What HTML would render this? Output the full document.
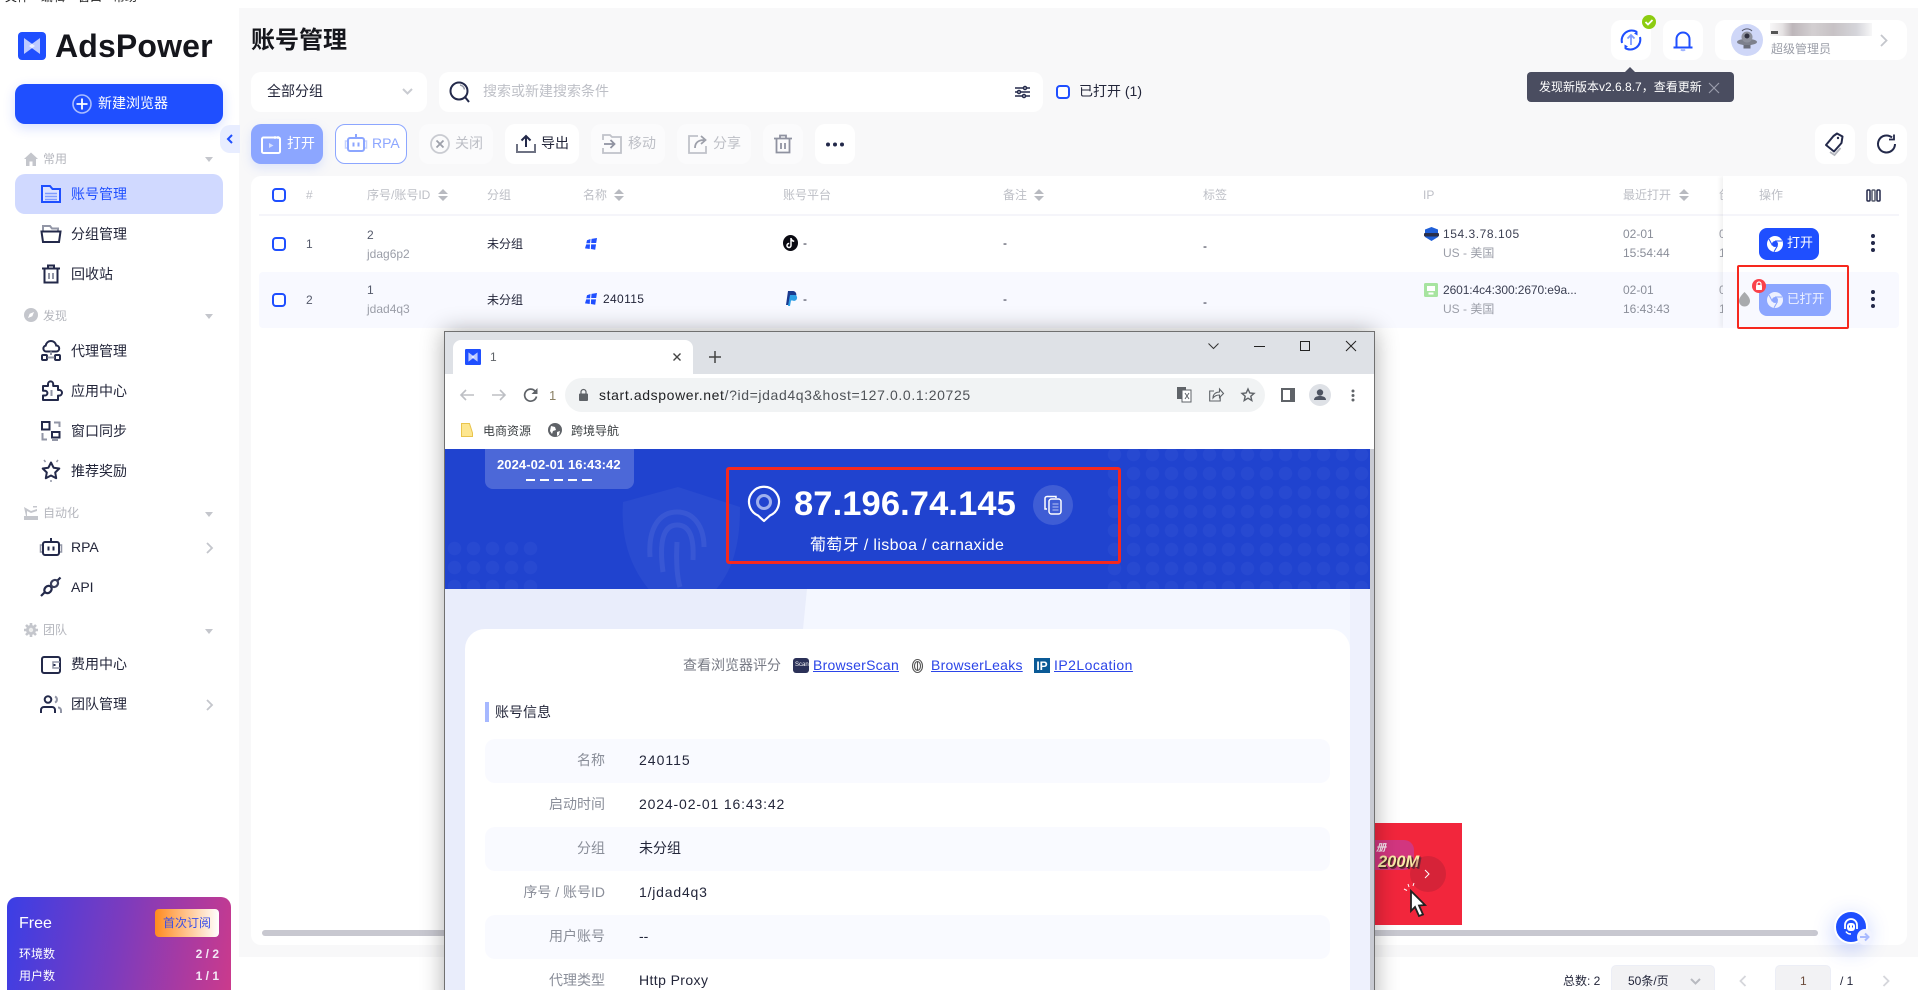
<!DOCTYPE html>
<html lang="zh"><head><meta charset="utf-8"><title>AdsPower</title>
<style>
*{box-sizing:border-box}
html,body{margin:0;padding:0;width:1918px;height:990px;overflow:hidden;background:#fff}
body{position:relative;font:12px "Liberation Sans","Noto Sans CJK SC",sans-serif;color:#23263a}
.a{position:absolute}
.t{position:absolute;white-space:nowrap;line-height:20px;margin-top:-10px;height:20px}
.m{font-size:14px}
.g{color:#9b9ea8}
.h{color:#bdbfc6}
.sec{color:#b4b6bd;font-size:12px}
svg{position:absolute;overflow:visible}
.btn{position:absolute;top:124px;height:40px;background:#fff;border-radius:10px}
.dis{background:#fbfbfc}
.cb{position:absolute;width:14px;height:14px;border:2px solid #1f4fff;border-radius:4px;background:#fff}
.row{position:absolute;left:485px;width:845px;height:44px;background:#f9faff;border-radius:10px}
.lb{position:absolute;right:1313px;white-space:nowrap;font-size:14px;color:#8a8e99;line-height:20px;margin-top:-10px}
.vl{position:absolute;left:639px;white-space:nowrap;font-size:14px;color:#23263a;line-height:20px;margin-top:-10px}
.lnk{color:#2b45e8;text-decoration:underline;font-size:14px;letter-spacing:.25px}
</style></head><body>

<!-- OS menu clipped -->
<div class="t" style="left:5px;top:-3px;color:#222">文件</div>
<div class="t" style="left:41px;top:-3px;color:#222">编辑</div>
<div class="t" style="left:78px;top:-3px;color:#222">窗口</div>
<div class="t" style="left:113px;top:-3px;color:#222">帮助</div>

<!-- main background -->
<div class="a" style="left:239px;top:8px;width:1679px;height:949px;background:#f8f8f9"></div>

<!-- SIDEBAR -->
<svg style="left:18px;top:32px" width="28" height="28" viewBox="0 0 28 28"><rect width="28" height="28" rx="4" fill="#1f4fff"/><path d="M6 6l11 8-11 8z" fill="#fff" opacity=".7"/><path d="M22 6l-11 8 11 8z" fill="#fff" opacity=".7"/></svg>
<div class="t" style="left:55px;top:46px;font-size:32px;font-weight:700;color:#15161c;letter-spacing:.15px">AdsPower</div>

<div class="a" style="left:15px;top:84px;width:208px;height:40px;background:#1f4fff;border-radius:10px;box-shadow:0 4px 12px rgba(31,79,255,.18)"></div>
<svg style="left:72px;top:94px" width="20" height="20" viewBox="0 0 20 20" fill="none"><circle cx="10" cy="10" r="9" stroke="#a9bcff" stroke-width="1.6"/><path d="M10 4.500v11M4.500 10h11" stroke="#fff" stroke-width="1.8"/></svg>
<div class="t m" style="left:98px;top:103px;color:#fff">新建浏览器</div>

<div class="a" style="left:220px;top:125px;width:20px;height:28px;background:#e8edff;border-radius:10px 0 0 10px"></div>
<svg style="left:226px;top:134px" width="8" height="10" viewBox="0 0 8 10" fill="none"><path d="M6 1L2 5l4 4" stroke="#1f4fff" stroke-width="2"/></svg>

<!-- sec: 常用 -->
<svg style="left:24px;top:152px" width="14" height="14" viewBox="0 0 14 14"><path d="M7 .5L14 7h-2v7H8.500V9.500h-3V14H2V7H0z" fill="#c4c6cc"/></svg>
<div class="t sec" style="left:43px;top:159px">常用</div>
<svg style="left:205px;top:157px" width="8" height="5"><path d="M0 0h8L4 5z" fill="#c4c6cc"/></svg>

<div class="a" style="left:15px;top:174px;width:208px;height:40px;background:#d0d9ff;border-radius:10px"></div>
<svg style="left:41px;top:185px" width="20" height="18" viewBox="0 0 20 18" fill="none"><path d="M1 1h8l2.500 3H19v13H1z" stroke="#1f4fff" stroke-width="2" fill="#dde3ff"/><path d="M4 8.500h12M4 11.500h12M4 14.500h12" stroke="#7f9cff" stroke-width="1.400"/></svg>
<div class="t m" style="left:71px;top:194px;color:#1f4fff">账号管理</div>

<svg style="left:40px;top:224px" width="22" height="19" viewBox="0 0 22 19" fill="none" stroke="#23294a" stroke-width="2"><path d="M3 7V2h7l2 2.500h6V7" stroke="#9296a6"/><path d="M1.500 7.500h19L19 18H3z"/></svg>
<div class="t m" style="left:71px;top:234px">分组管理</div>

<svg style="left:41px;top:264px" width="20" height="20" viewBox="0 0 20 20" fill="none" stroke="#23294a" stroke-width="2"><path d="M1 4.500h18M7 4V1.500h6V4M3.500 5v13.500h13V5"/><path d="M8 9v6M12 9v6" stroke="#9296a6"/></svg>
<div class="t m" style="left:71px;top:274px">回收站</div>

<!-- sec: 发现 -->
<svg style="left:24px;top:308px" width="14" height="14" viewBox="0 0 14 14"><circle cx="7" cy="7" r="7" fill="#c4c6cc"/><path d="M10 4L8.300 8.300 4 10l1.700-4.300z" fill="#fff"/></svg>
<div class="t sec" style="left:43px;top:316px">发现</div>
<svg style="left:205px;top:314px" width="8" height="5"><path d="M0 0h8L4 5z" fill="#c4c6cc"/></svg>

<svg style="left:41px;top:341px" width="20" height="20" viewBox="0 0 20 20" fill="none" stroke="#23294a" stroke-width="2"><path d="M5 10.500a3 3 0 0 1-.3-5.900A5.300 5.300 0 0 1 15.200 4.500a3 3 0 0 1 0 6z"/><path d="M10 10.500v3.500" stroke="#9296a6"/><rect x="1" y="14" width="5" height="5" rx="1"/><rect x="14" y="14" width="5" height="5" rx="1"/><path d="M6.500 16.500h7" stroke="#9296a6"/></svg>
<div class="t m" style="left:71px;top:351px">代理管理</div>

<svg style="left:41px;top:381px" width="21" height="20" viewBox="0 0 21 20" fill="none" stroke="#23294a" stroke-width="2" stroke-linejoin="round"><path d="M2 5h5V3a2.600 2.600 0 0 1 5.200 0v2h4.800v4h1.200a2.800 2.800 0 0 1 0 5.600H17V19H2v-4.500h2a2.400 2.400 0 0 0 0-4.800H2z"/><path d="M10.500 9v6" stroke="#9296a6"/></svg>
<div class="t m" style="left:71px;top:391px">应用中心</div>

<svg style="left:41px;top:421px" width="20" height="20" viewBox="0 0 20 20" fill="none" stroke="#23294a" stroke-width="2"><rect x="1" y="1" width="7.500" height="7.500"/><rect x="11" y="11" width="7.500" height="5.500"/><path d="M13 1.500h5.500V6M1.500 12v6.500H6M11 19h6" stroke="#9296a6"/></svg>
<div class="t m" style="left:71px;top:431px">窗口同步</div>

<svg style="left:41px;top:459px" width="20" height="24" viewBox="0 0 20 24" fill="none"><path d="M10 3.500l2.600 5.200 5.700.8-4.100 4 1 5.700-5.200-2.700-5.200 2.700 1-5.700-4.100-4 5.700-.8z" stroke="#23294a" stroke-width="2" stroke-linejoin="round"/><path d="M3 1l1.500 2M17 1l-1.500 2M10 21v2" stroke="#9296a6" stroke-width="1.500"/></svg>
<div class="t m" style="left:71px;top:471px">推荐奖励</div>

<!-- sec: 自动化 -->
<svg style="left:24px;top:506px" width="14" height="14" viewBox="0 0 14 14" fill="#c4c6cc"><path d="M0 1l7 4 6-2v2L7 7 3 5v5h-1zM0 10h14v4H0zM9 0h4v1.500H9z"/></svg>
<div class="t sec" style="left:43px;top:513px">自动化</div>
<svg style="left:205px;top:512px" width="8" height="5"><path d="M0 0h8L4 5z" fill="#c4c6cc"/></svg>

<svg style="left:39px;top:538px" width="24" height="18" viewBox="0 0 24 18" fill="none"><path d="M12 0v4" stroke="#23294a" stroke-width="2"/><rect x="4" y="4" width="16" height="13" rx="2" stroke="#23294a" stroke-width="2"/><path d="M9.500 8.500v4M14.500 8.500v4" stroke="#23294a" stroke-width="2"/><path d="M3 7H1.500v7H3M21 7h1.500v7H21" stroke="#9296a6" stroke-width="1.500"/></svg>
<div class="t m" style="left:71px;top:547px">RPA</div>
<svg style="left:206px;top:542px" width="7" height="12" fill="none"><path d="M1 1l5 5-5 5" stroke="#c4c6cc" stroke-width="1.800"/></svg>

<svg style="left:41px;top:577px" width="20" height="20" viewBox="0 0 20 20" fill="none" stroke="#23294a" stroke-width="2.200"><path d="M0 19l4-4M16 4l3.500-3.500"/><ellipse cx="7" cy="12.500" rx="3.300" ry="4" transform="rotate(45 7 12.500)"/><ellipse cx="13.500" cy="6.500" rx="3.300" ry="3.800" transform="rotate(45 13.500 6.500)" stroke="#3a3f5c"/></svg>
<div class="t m" style="left:71px;top:587px">API</div>

<!-- sec: 团队 -->
<svg style="left:24px;top:623px" width="14" height="14" viewBox="0 0 14 14"><path d="M7 0v14M0 7h14M2 2l10 10M12 2L2 12" stroke="#c4c6cc" stroke-width="2.600"/><circle cx="7" cy="7" r="5" fill="#c4c6cc"/><circle cx="7" cy="7" r="2.200" fill="#eceded"/></svg>
<div class="t sec" style="left:43px;top:630px">团队</div>
<svg style="left:205px;top:629px" width="8" height="5"><path d="M0 0h8L4 5z" fill="#c4c6cc"/></svg>

<svg style="left:41px;top:656px" width="20" height="18" viewBox="0 0 20 18" fill="none"><rect x="1" y="1" width="18" height="16" rx="2" stroke="#23294a" stroke-width="2"/><path d="M19 6h-7v6h7" stroke="#9296a6" stroke-width="1.500"/><rect x="12.500" y="8" width="2" height="2" fill="#23294a"/></svg>
<div class="t m" style="left:71px;top:664px">费用中心</div>

<svg style="left:40px;top:695px" width="22" height="18" viewBox="0 0 22 18" fill="none" stroke="#23294a" stroke-width="2"><circle cx="8" cy="4.500" r="3.300"/><path d="M1 18v-3a3 3 0 0 1 3-3h8a3 3 0 0 1 3 3v3"/><path d="M15 1.500a3.300 3.300 0 0 1 0 6M18 12.500a3 3 0 0 1 3 3V18" stroke="#9296a6"/></svg>
<div class="t m" style="left:71px;top:704px">团队管理</div>
<svg style="left:206px;top:699px" width="7" height="12" fill="none"><path d="M1 1l5 5-5 5" stroke="#c4c6cc" stroke-width="1.800"/></svg>

<!-- Free card -->
<div class="a" style="left:7px;top:897px;width:224px;height:93px;border-radius:10px 10px 0 0;background:linear-gradient(100deg,#3a3ee6 0%,#7d3bbd 50%,#cb3a8c 100%)"></div>
<div class="t" style="left:19px;top:924px;color:#fff;font-size:16px">Free</div>
<div class="a" style="left:155px;top:909px;width:64px;height:28px;border-radius:4px;background:linear-gradient(90deg,#ff8a1f,#fff);color:#3a4fe8;text-align:center;line-height:28px;font-size:12px">首次订阅</div>
<div class="t" style="left:19px;top:954px;color:#fff">环境数</div>
<div class="t" style="right:1699px;top:954px;color:#f3e8f6;font-weight:700">2 / 2</div>
<div class="t" style="left:19px;top:976px;color:#fff">用户数</div>
<div class="t" style="right:1699px;top:976px;color:#f3e8f6;font-weight:700">1 / 1</div>

<!-- HEADER -->
<div class="t" style="left:251px;top:41px;font-size:24px;font-weight:700;color:#15161c;line-height:30px;height:30px;margin-top:-15px">账号管理</div>

<div class="a" style="left:251px;top:72px;width:176px;height:40px;background:#fff;border-radius:10px"></div>
<div class="t m" style="left:267px;top:91px">全部分组</div>
<svg style="left:402px;top:88px" width="11" height="7" fill="none"><path d="M1 1l4.500 4.500L10 1" stroke="#c9cbd1" stroke-width="2"/></svg>

<div class="a" style="left:439px;top:72px;width:604px;height:40px;background:#fff;border-radius:10px"></div>
<svg style="left:449px;top:81px" width="21" height="22" viewBox="0 0 21 22" fill="none"><circle cx="10" cy="10" r="8.500" stroke="#23294a" stroke-width="2"/><path d="M16 16l4 5" stroke="#23294a" stroke-width="2"/><path d="M11 4a5.500 5.500 0 0 1 4.500 4.500" stroke="#9296a6" stroke-width="1.500"/></svg>
<div class="t m" style="left:483px;top:91px;color:#bdbfc6">搜索或新建搜索条件</div>
<svg style="left:1015px;top:85px" width="15" height="14" viewBox="0 0 15 14" fill="none" stroke="#23294a" stroke-width="1.500"><path d="M0 3h15M0 7h15M0 11h15"/><circle cx="10" cy="3" r="1.500" fill="#fff"/><circle cx="4" cy="7" r="1.500" fill="#fff"/><circle cx="9" cy="11" r="1.500" fill="#fff"/></svg>
<div class="cb" style="left:1056px;top:85px"></div>
<div class="t" style="left:1079px;top:91px;font-size:14px">已打开 (1)</div>

<!-- Toolbar -->
<div class="a" style="left:251px;top:124px;width:72px;height:40px;background:#8ca6ff;border-radius:10px;box-shadow:0 4px 10px rgba(140,166,255,.25)"></div>
<svg style="left:261px;top:135px" width="20" height="19" viewBox="0 0 20 19" fill="none"><rect x="1" y="2.500" width="18" height="15.500" rx="1.500" stroke="#fff" stroke-width="2"/><path d="M14 1v3M17 1v3" stroke="#fff"/><path d="M8 8l4.500 2.500L8 13z" fill="#d5deff"/></svg>
<div class="t m" style="left:287px;top:143px;color:#fff">打开</div>

<div class="a" style="left:335px;top:124px;width:72px;height:40px;background:#fff;border:1px solid #8ca6ff;border-radius:10px"></div>
<svg style="left:344px;top:134px" width="24" height="18" viewBox="0 0 24 18" fill="none"><path d="M12 0v4" stroke="#8ca6ff" stroke-width="2"/><rect x="4" y="4" width="16" height="13" rx="2" stroke="#8ca6ff" stroke-width="2"/><path d="M9.500 8.500v4M14.500 8.500v4" stroke="#8ca6ff" stroke-width="2"/><path d="M3 7H1.500v7H3M21 7h1.500v7H21" stroke="#c5d2ff" stroke-width="1.500"/></svg>
<div class="t m" style="left:372px;top:143px;color:#8ca6ff">RPA</div>

<div class="btn dis" style="left:419px;width:74px"></div>
<svg style="left:430px;top:134px" width="20" height="20" viewBox="0 0 20 20" fill="none"><circle cx="10" cy="10" r="9" stroke="#c9cbd1" stroke-width="1.800"/><path d="M6.500 6.500l7 7M13.500 6.500l-7 7" stroke="#9da0aa" stroke-width="1.800"/></svg>
<div class="t m" style="left:455px;top:143px;color:#bdbfc6">关闭</div>

<div class="btn" style="left:505px;width:74px"></div>
<svg style="left:516px;top:134px" width="20" height="19" viewBox="0 0 20 19" fill="none"><path d="M1 10v8h18v-8" stroke="#6e7283" stroke-width="2"/><path d="M10 13V2M5.500 6.500L10 2l4.500 4.500" stroke="#23294a" stroke-width="2"/></svg>
<div class="t m" style="left:541px;top:143px;color:#23263a">导出</div>

<div class="btn dis" style="left:591px;width:74px"></div>
<svg style="left:602px;top:134px" width="20" height="20" viewBox="0 0 20 20" fill="none" stroke="#c0c2c9" stroke-width="1.800"><path d="M1 6V1h7l2 2h9v16H1v-5"/><path d="M2 10h10M8.500 6l4 4-4 4" stroke="#8f92a0"/></svg>
<div class="t m" style="left:628px;top:143px;color:#bdbfc6">移动</div>

<div class="btn dis" style="left:677px;width:74px"></div>
<svg style="left:688px;top:134px" width="20" height="20" viewBox="0 0 20 20" fill="none"><path d="M10 2H1v17h17v-7" stroke="#c0c2c9" stroke-width="1.800"/><path d="M7 14c0-5 3-8 9-8M13 2l4.500 4L13 10" stroke="#9da0aa" stroke-width="1.800"/></svg>
<div class="t m" style="left:713px;top:143px;color:#bdbfc6">分享</div>

<div class="btn dis" style="left:763px;width:40px"></div>
<svg style="left:773px;top:134px" width="20" height="20" viewBox="0 0 20 20" fill="none" stroke="#8f92a0" stroke-width="1.800"><path d="M1 4.500h18M7 4V1.500h6V4M3.500 5v13.500h13V5M8 9v6M12 9v6"/></svg>

<div class="btn" style="left:815px;width:40px"></div>
<svg style="left:826px;top:142px" width="18" height="5"><circle cx="2" cy="2.500" r="2" fill="#23294a"/><circle cx="9" cy="2.500" r="2" fill="#23294a"/><circle cx="16" cy="2.500" r="2" fill="#23294a"/></svg>

<div class="btn" style="left:1815px;width:40px"></div>
<svg style="left:1824px;top:132px" width="22" height="24" viewBox="0 0 22 24" fill="none"><path d="M13 1.500l5.500 3-1 6.500-7.500 8.500-8-6.500 7.500-9z" stroke="#23294a" stroke-width="2" stroke-linejoin="round"/><circle cx="14" cy="6" r="1.200" fill="#23294a"/><path d="M6 20l4.500 3 6-7" stroke="#b4b6bd" stroke-width="1.800"/></svg>

<div class="btn" style="left:1867px;width:40px"></div>
<svg style="left:1877px;top:134px" width="20" height="20" viewBox="0 0 20 20" fill="none"><path d="M18 10a8.500 8.500 0 1 1-3-6.500" stroke="#23294a" stroke-width="2"/><path d="M17 .5v5h-5" stroke="#23294a" stroke-width="1.800"/></svg>

<!-- top right -->
<div class="a" style="left:1611px;top:20px;width:40px;height:40px;background:#fff;border-radius:10px"></div>
<svg style="left:1620px;top:29px" width="22" height="22" viewBox="0 0 22 22" fill="none"><path d="M2 14A10 10 0 0 1 17 3M20 8a10 10 0 0 1-15 11" stroke="#1f4fff" stroke-width="2"/><path d="M14 4.500l3.500-2v4zM8 17.500l-3.500 2v-4z" fill="#1f4fff"/><path d="M11 16V6M7.500 9.500L11 6l3.500 3.500" stroke="#7f9cff" stroke-width="1.800"/></svg>
<svg style="left:1642px;top:15px" width="14" height="14" viewBox="0 0 14 14"><circle cx="7" cy="7" r="7" fill="#8ccc10"/><path d="M3.500 7l2.500 2.500 4.500-4.500" fill="none" stroke="#fff" stroke-width="1.800"/></svg>

<div class="a" style="left:1663px;top:20px;width:40px;height:40px;background:#fff;border-radius:10px"></div>
<svg style="left:1673px;top:30px" width="20" height="21" viewBox="0 0 20 21" fill="none"><path d="M3.500 17V9a6.500 6.500 0 0 1 13 0v8M.5 17.500h19" stroke="#1f4fff" stroke-width="2"/><path d="M8 19.500a2.500 2 0 0 0 4 0" stroke="#9db2ff" stroke-width="2"/></svg>

<div class="a" style="left:1715px;top:20px;width:192px;height:40px;background:#fff;border-radius:10px"></div>
<svg style="left:1731px;top:24px" width="32" height="32" viewBox="0 0 32 32"><circle cx="16" cy="16" r="16" fill="#cfd7f8"/><ellipse cx="16" cy="18" rx="10" ry="3.200" fill="#7d808c"/><circle cx="16" cy="13" r="5.500" fill="#8e919d"/><circle cx="16" cy="12" r="2.500" fill="#2f3140"/><rect x="12.500" y="21" width="7" height="3.500" fill="#6b6e7a"/><path d="M11 7a7 7 0 0 1 10 0" stroke="#55586a" stroke-width="1" fill="none"/></svg>
<div class="a" style="left:1770px;top:23px;width:102px;height:13px;background:linear-gradient(90deg,#f8f7f8 0%,#e6e3e4 12%,#bdb6ba 22%,#d3cfd1 42%,#c7c2c5 62%,#d5d5da 85%,#f7f7f8 100%)"></div>
<div class="a" style="left:1771px;top:31px;width:7px;height:3px;background:#555"></div>
<div class="t" style="left:1771px;top:49px;color:#9b9ea8">超级管理员</div>
<svg style="left:1880px;top:34px" width="8" height="13" fill="none"><path d="M1 1l5.500 5.500L1 12" stroke="#c4c6cc" stroke-width="1.800"/></svg>

<!-- tooltip -->
<div class="a" style="left:1527px;top:72px;width:207px;height:30px;background:#4a4d60;border-radius:4px"></div>
<svg style="left:1625px;top:67px" width="10" height="5"><path d="M0 5L5 0l5 5z" fill="#4a4d60"/></svg>
<div class="t" style="left:1539px;top:87px;color:#fff">发现新版本v2.6.8.7，查看更新</div>
<svg style="left:1708px;top:82px" width="12" height="12" fill="none"><path d="M1 1l10 10M11 1L1 11" stroke="#9a9cab" stroke-width="1.200"/></svg>

<!-- TABLE -->
<div class="a" style="left:251px;top:176px;width:1656px;height:769px;background:#fff;border-radius:10px"></div>
<div class="a" style="left:259px;top:214px;width:1640px;height:2px;background:#f5f5fa"></div>
<div class="a" style="left:259px;top:272px;width:1640px;height:56px;background:#f8f9ff;border-radius:4px"></div>

<div class="cb" style="left:272px;top:188px"></div>
<div class="t h" style="left:306px;top:195px">#</div>
<div class="t h" style="left:367px;top:195px">序号/账号ID</div>
<svg style="left:438px;top:189px" width="10" height="12"><path d="M0 5l5-5 5 5zM0 7l5 5 5-5z" fill="#b8bac0"/></svg>
<div class="t h" style="left:487px;top:195px">分组</div>
<div class="t h" style="left:583px;top:195px">名称</div>
<svg style="left:614px;top:189px" width="10" height="12"><path d="M0 5l5-5 5 5zM0 7l5 5 5-5z" fill="#b8bac0"/></svg>
<div class="t h" style="left:783px;top:195px">账号平台</div>
<div class="t h" style="left:1003px;top:195px">备注</div>
<svg style="left:1034px;top:189px" width="10" height="12"><path d="M0 5l5-5 5 5zM0 7l5 5 5-5z" fill="#b8bac0"/></svg>
<div class="t h" style="left:1203px;top:195px">标签</div>
<div class="t h" style="left:1423px;top:195px">IP</div>
<div class="t h" style="left:1623px;top:195px">最近打开</div>
<svg style="left:1679px;top:189px" width="10" height="12"><path d="M0 5l5-5 5 5zM0 7l5 5 5-5z" fill="#b8bac0"/></svg>
<div class="t h" style="left:1719px;top:195px">创</div>

<!-- row 1 -->
<div class="cb" style="left:272px;top:237px"></div>
<div class="t g" style="left:306px;top:244px;color:#555a6b">1</div>
<div class="t" style="left:367px;top:235px;color:#555a6b">2</div>
<div class="t g" style="left:367px;top:254px">jdag6p2</div>
<div class="t" style="left:487px;top:244px">未分组</div>
<svg style="left:585px;top:238px" width="12" height="12" viewBox="0 0 12 12" fill="#1f4fff"><path d="M2 2.200L5.500 1l-.4 4.300H1.300zM6.500.9L12 0l-.8 5H6.200zM1.200 6.400H5L4.700 11 0 10.400zM6.100 6.400H11l-.8 5.300-4.300-.7z"/></svg>
<svg style="left:783px;top:235px" width="15" height="16" viewBox="0 0 15 16"><ellipse cx="7.500" cy="8" rx="7.500" ry="8" fill="#0a0a12"/><path d="M8 3v7.500a2 2 0 1 1-1.800-2M8 3.500c.5 1.800 1.800 2.600 3.200 2.700" fill="none" stroke="#fff" stroke-width="1.500"/></svg>
<div class="t" style="left:803px;top:243px">-</div>
<div class="t" style="left:1003px;top:243px">-</div>
<div class="t" style="left:1203px;top:246px">-</div>
<svg style="left:1424px;top:227px" width="15" height="14" viewBox="0 0 15 14"><path d="M7.500 0L14 2.500V10l-6.500 4L1 10V2.500z" fill="#1f5fd8"/><rect x="0" y="6" width="15" height="3.500" rx="1" fill="#2a2f4a"/></svg>
<div class="t" style="left:1443px;top:234px;color:#3b3f52;letter-spacing:.55px">154.3.78.105</div>
<div class="t g" style="left:1443px;top:253px">US - 美国</div>
<div class="t g" style="left:1623px;top:234px;color:#8a8e99">02-01</div>
<div class="t g" style="left:1623px;top:253px;color:#8a8e99">15:54:44</div>
<div class="t g" style="left:1719px;top:234px">0</div>
<div class="t g" style="left:1719px;top:253px">1</div>

<!-- row 2 -->
<div class="cb" style="left:272px;top:293px"></div>
<div class="t g" style="left:306px;top:300px;color:#555a6b">2</div>
<div class="t" style="left:367px;top:290px;color:#555a6b">1</div>
<div class="t g" style="left:367px;top:309px">jdad4q3</div>
<div class="t" style="left:487px;top:300px">未分组</div>
<svg style="left:585px;top:293px" width="12" height="12" viewBox="0 0 12 12" fill="#1f4fff"><path d="M2 2.200L5.500 1l-.4 4.300H1.300zM6.500.9L12 0l-.8 5H6.200zM1.200 6.400H5L4.700 11 0 10.400zM6.100 6.400H11l-.8 5.300-4.300-.7z"/></svg>
<div class="t" style="left:603px;top:299px;letter-spacing:.35px">240115</div>
<svg style="left:786px;top:291px" width="11" height="16" viewBox="0 0 11 16"><path d="M2 0h5a3.500 3.500 0 0 1 3 5 4 4 0 0 1-4 4H4l-1 5H0z" fill="#1a3a8f"/><path d="M4 4h5.500a3 3 0 0 1-3 5.500H5L4 15H2z" fill="#2ea0e6"/></svg>
<div class="t" style="left:803px;top:299px">-</div>
<div class="t" style="left:1003px;top:299px">-</div>
<div class="t" style="left:1203px;top:302px">-</div>
<svg style="left:1424px;top:283px" width="14" height="14" viewBox="0 0 14 14"><rect width="14" height="14" rx="1.500" fill="#a7e4a0"/><rect x="3" y="3" width="8" height="5" fill="#fff"/><rect x="4.500" y="9.500" width="5" height="2" fill="#fff"/></svg>
<div class="t" style="left:1443px;top:290px;color:#3b3f52;letter-spacing:-.1px">2601:4c4:300:2670:e9a...</div>
<div class="t g" style="left:1443px;top:309px">US - 美国</div>
<div class="t g" style="left:1623px;top:290px;color:#8a8e99">02-01</div>
<div class="t g" style="left:1623px;top:309px;color:#8a8e99">16:43:43</div>
<div class="t g" style="left:1719px;top:290px">0</div>
<div class="t g" style="left:1719px;top:309px">1</div>

<!-- fixed column -->
<div class="a" style="left:1723px;top:176px;width:184px;height:152px;background:#fff;box-shadow:-3px 0 4px rgba(0,0,0,.05);border-radius:0 10px 0 0;clip-path:inset(0 0 0 -8px)"></div>
<div class="a" style="left:1723px;top:214px;width:176px;height:2px;background:#f5f5fa"></div>
<div class="a" style="left:1723px;top:272px;width:176px;height:56px;background:#f8f9ff;border-radius:0 4px 4px 0"></div>
<div class="t h" style="left:1759px;top:195px">操作</div>
<svg style="left:1866px;top:189px" width="15" height="13" fill="none" stroke="#23294a" stroke-width="1.500"><rect x="1" y="1" width="3" height="11" rx="1"/><rect x="6" y="1" width="3" height="11" rx="1" stroke="#555a6b"/><rect x="11" y="1" width="3" height="11" rx="1"/></svg>

<div class="a" style="left:1759px;top:228px;width:60px;height:32px;background:#1f4fff;border-radius:8px"></div>
<svg style="left:1767px;top:236px" width="16" height="16" viewBox="0 0 16 16"><circle cx="8" cy="8" r="8" fill="#fff"/><circle cx="8" cy="8" r="3" fill="#1f4fff"/><path d="M8 5h7M5.400 9.500L2 3M10.600 9.500L7 15.800" stroke="#1f4fff" stroke-width="1"/></svg>
<div class="t m" style="left:1787px;top:243px;font-size:13px;color:#fff">打开</div>
<svg style="left:1871px;top:233px" width="4" height="20"><circle cx="2" cy="3" r="2" fill="#23294a"/><circle cx="2" cy="10" r="2" fill="#23294a"/><circle cx="2" cy="17" r="2" fill="#23294a"/></svg>

<svg style="left:1739px;top:292px" width="11" height="15" viewBox="0 0 11 15"><path d="M5.500 0c3 3 5.500 6 5.500 9a5.500 5.500 0 0 1-11 0C0 6 2.500 3 5.500 0z" fill="#a8aaad"/></svg>
<div class="a" style="left:1759px;top:284px;width:72px;height:32px;background:#8ca6ff;border-radius:8px"></div>
<svg style="left:1767px;top:292px" width="16" height="16" viewBox="0 0 16 16"><circle cx="8" cy="8" r="8" fill="#eef1ff"/><circle cx="8" cy="8" r="3" fill="#8ca6ff"/><path d="M8 5h7M5.400 9.500L2 3M10.600 9.500L7 15.800" stroke="#8ca6ff" stroke-width="1"/></svg>
<div class="t" style="left:1787px;top:299px;font-size:12.500px;color:#eef1ff">已打开</div>
<svg style="left:1752px;top:279px" width="14" height="14" viewBox="0 0 14 14"><circle cx="7" cy="7" r="7" fill="#f9424b"/><rect x="4" y="6" width="6" height="5" rx=".8" fill="#fff"/><path d="M5 6V5a2 2 0 0 1 4 0v1" fill="none" stroke="#fff" stroke-width="1.200"/></svg>
<svg style="left:1871px;top:289px" width="4" height="20"><circle cx="2" cy="3" r="2" fill="#23294a"/><circle cx="2" cy="10" r="2" fill="#23294a"/><circle cx="2" cy="17" r="2" fill="#23294a"/></svg>
<div class="a" style="left:1737px;top:265px;width:112px;height:64px;border:2px solid #f6281e;border-radius:2px"></div>

<!-- h scrollbar -->
<div class="a" style="left:262px;top:930px;width:1556px;height:6px;background:#c8c8d0;border-radius:3px"></div>

<!-- ad -->
<div class="a" style="left:1374px;top:823px;width:88px;height:102px;background:#f2263c;overflow:hidden">
 <div class="a" style="left:0;top:17px;width:40px;height:30px;background:#d2367f;border-radius:0 10px 10px 0"></div>
 <div class="a" style="left:2px;top:20px;color:#f8e6f0;font-size:10px;font-weight:700;font-style:italic;line-height:12px">册</div>
 <div class="a" style="left:4px;top:29px;color:#f9eaa6;font-size:16.500px;font-weight:700;font-style:italic;line-height:20px;text-shadow:1px 1px 0 #4a1f28,2px 2px 0 #6e2a38">200M</div>
 <div class="a" style="left:36px;top:33px;width:36px;height:36px;border-radius:50%;background:rgba(150,30,50,.3)"></div>
 <svg style="left:50px;top:46px" width="7" height="10" fill="none"><path d="M1 1l4 4-4 4" stroke="#fff" stroke-width="1"/></svg>
 <svg style="left:28px;top:60px" width="28" height="34" viewBox="0 0 28 34" fill="none"><path d="M2 6l3 1.500M6 1l1 3M12 0l-1 3" stroke="#fff" stroke-width="1"/><path d="M9 8l14 14-6 .5 4 9-4 1.500-4-9-4 4z" fill="#fff" stroke="#222" stroke-width="1.800"/></svg>
</div>

<!-- help -->
<div class="a" style="left:1834px;top:910px;width:34px;height:34px;border-radius:50%;background:#1f4fff;border:2px solid #fff;box-shadow:0 6px 22px rgba(31,79,255,.28)"></div>
<svg style="left:1843px;top:918px" width="16" height="18" viewBox="0 0 16 18" fill="none"><path d="M2 11V7a6 6 0 0 1 12 0v4" stroke="#fff" stroke-width="1.800"/><rect x="4" y="5" width="8" height="8" rx="3" fill="#fff"/><path d="M6.500 7.500v2M9.500 7.500v2" stroke="#1f4fff"/><path d="M3 13.500c1 2 3 2.500 5 2.500" stroke="#fff" stroke-width="1.500"/></svg>
<svg style="left:1857px;top:929px" width="16" height="16" viewBox="0 0 16 16"><circle cx="8" cy="8" r="8" fill="#f1f3ff"/><path d="M3 8h8M8 4.500L11.500 8 8 11.500" fill="none" stroke="#a8baff" stroke-width="2"/></svg>

<!-- pagination -->
<div class="t" style="left:1563px;top:981px">总数: 2</div>
<div class="a" style="left:1611px;top:965px;width:104px;height:30px;background:#f2f2f4;border:1px solid #eceef6;border-radius:5px"></div>
<div class="t" style="left:1628px;top:981px">50条/页</div>
<svg style="left:1690px;top:978px" width="11" height="7" fill="none"><path d="M1 1l4.500 4.500L10 1" stroke="#b8bac0" stroke-width="2"/></svg>
<svg style="left:1739px;top:975px" width="8" height="12" fill="none"><path d="M6.500 1L1.500 6l5 5" stroke="#d5d6db" stroke-width="1.800"/></svg>
<div class="a" style="left:1775px;top:965px;width:56px;height:30px;background:#f2f2f4;border:1px solid #eceef6;border-radius:5px"></div>
<div class="t" style="left:1800px;top:981px;color:#6b4a3a">1</div>
<div class="t" style="left:1840px;top:981px">/ 1</div>
<svg style="left:1882px;top:975px" width="8" height="12" fill="none"><path d="M1.500 1l5 5-5 5" stroke="#d5d6db" stroke-width="1.800"/></svg>

<!-- BROWSER WINDOW -->
<div class="a" style="left:444px;top:331px;width:931px;height:680px;background:#fff;border:1px solid #707070;box-shadow:0 0 22px rgba(0,0,0,.32)"></div>
<div class="a" style="left:445px;top:332px;width:929px;height:42px;background:#dee1e6"></div>
<div class="a" style="left:453px;top:340px;width:240px;height:34px;background:#fff;border-radius:8px 8px 0 0"></div>
<svg style="left:465px;top:349px" width="16" height="16" viewBox="0 0 28 28"><rect width="28" height="28" rx="2" fill="#1f4fff"/><path d="M6 6l11 8-11 8z" fill="#fff" opacity=".7"/><path d="M22 6l-11 8 11 8z" fill="#fff" opacity=".7"/></svg>
<div class="t" style="left:490px;top:357px;color:#5f6368">1</div>
<svg style="left:673px;top:353px" width="8" height="8" fill="none"><path d="M.5.5l7 7M7.500.5l-7 7" stroke="#444" stroke-width="1.400"/></svg>
<svg style="left:709px;top:351px" width="12" height="12" fill="none"><path d="M6 0v12M0 6h12" stroke="#444" stroke-width="1.500"/></svg>
<svg style="left:1208px;top:343px" width="11" height="6" fill="none"><path d="M.5.500L5.500 5.500 10.500.5" stroke="#333"/></svg>
<svg style="left:1254px;top:346px" width="11" height="1"><rect width="11" height="1" fill="#222"/></svg>
<svg style="left:1300px;top:341px" width="10" height="10" fill="none"><rect x=".5" y=".5" width="9" height="9" stroke="#222"/></svg>
<svg style="left:1346px;top:341px" width="10" height="10" fill="none"><path d="M0 0l10 10M10 0L0 10" stroke="#222"/></svg>

<!-- toolbar -->
<svg style="left:460px;top:389px" width="14" height="12" fill="none"><path d="M14 6H1M6 1L1 6l5 5" stroke="#bdbfc4" stroke-width="1.600"/></svg>
<svg style="left:492px;top:389px" width="14" height="12" fill="none"><path d="M0 6h13M8 1l5 5-5 5" stroke="#bdbfc4" stroke-width="1.600"/></svg>
<svg style="left:524px;top:388px" width="14" height="14" viewBox="0 0 14 14" fill="none"><path d="M12.500 8.500A6 6 0 1 1 11 3" stroke="#5f6368" stroke-width="1.700"/><path d="M13.500 0v6h-6z" fill="#5f6368"/></svg>
<div class="t" style="left:549px;top:396px;color:#8a8065;font-size:13px">1</div>
<div class="a" style="left:565px;top:378px;width:700px;height:34px;background:#f1f3f4;border-radius:17px"></div>
<svg style="left:579px;top:389px" width="9" height="12" viewBox="0 0 9 12"><rect y="4.500" width="9" height="7.500" rx="1" fill="#5f6368"/><path d="M2 5V3a2.500 2.500 0 0 1 5 0v2" fill="none" stroke="#5f6368" stroke-width="1.200"/></svg>
<div class="t" style="left:599px;top:395px;font-size:14px;color:#202124;letter-spacing:.62px">start.adspower.net<span style="color:#4f5358">/?id=jdad4q3&amp;host=127.0.0.1:20725</span></div>
<svg style="left:1177px;top:387px" width="14" height="16" viewBox="0 0 14 16"><rect width="9" height="12" fill="#5f6368"/><rect x="5" y="3" width="9" height="12" fill="#fff" stroke="#5f6368" stroke-width="1"/><path d="M8 6l4 6M12 6l-4 6" stroke="#5f6368"/></svg>
<svg style="left:1209px;top:388px" width="15" height="14" viewBox="0 0 15 14" fill="none" stroke="#5f6368" stroke-width="1.100"><path d="M5 3H.7v10h10.500V9"/><path d="M4 10c0-4 3-6 6.500-6V1l4 4.500-4 4V7C8 7 5.500 8 4 10z"/></svg>
<svg style="left:1241px;top:388px" width="14" height="14" viewBox="0 0 14 14" fill="none"><path d="M7 1l1.800 4 4.200.4-3.200 2.800 1 4.300L7 10.200 3.200 12.500l1-4.300L1 5.400 5.200 5z" stroke="#5f6368" stroke-width="1.400"/></svg>
<svg style="left:1281px;top:388px" width="14" height="14"><rect width="14" height="14" fill="#5f6368"/><rect x="2" y="2" width="7" height="10" fill="#fff"/></svg>
<svg style="left:1309px;top:384px" width="22" height="22" viewBox="0 0 22 22"><circle cx="11" cy="11" r="11" fill="#dee1e6"/><circle cx="11" cy="8.500" r="3.200" fill="#4e5462"/><path d="M5 16c0-3 3-4 6-4s6 1 6 4z" fill="#4e5462"/></svg>
<svg style="left:1351px;top:389px" width="4" height="13"><circle cx="2" cy="2" r="1.500" fill="#5f6368"/><circle cx="2" cy="6.500" r="1.500" fill="#5f6368"/><circle cx="2" cy="11" r="1.500" fill="#5f6368"/></svg>

<!-- bookmarks -->
<svg style="left:461px;top:423px" width="12" height="14" viewBox="0 0 12 14"><path d="M.5.500h8L11.500 10v3.500H.5z" fill="#fde68f" stroke="#e9c44c"/></svg>
<div class="t" style="left:483px;top:431px;color:#3c4043">电商资源</div>
<svg style="left:548px;top:423px" width="14" height="14" viewBox="0 0 14 14"><circle cx="7" cy="7" r="7" fill="#5f6368"/><path d="M3 3l4 1 1 3-3 1-1 3-2-3zM9 9l3-1-1 4-2 1z" fill="#fff"/></svg>
<div class="t" style="left:571px;top:431px;color:#3c4043">跨境导航</div>

<!-- page -->
<div class="a" style="left:445px;top:449px;width:925px;height:562px;background:#e9edfb"></div>
<div class="a" style="left:445px;top:589px;width:925px;height:422px;background:#f4f7ff;clip-path:polygon(362px 0,100% 0,100% 100%,320px 100%)"></div>
<div class="a" style="left:1350px;top:589px;width:20px;height:422px;background:#eef1fd"></div>
<div class="a" style="left:1370px;top:449px;width:4px;height:541px;background:#c8cad2"></div>
<div class="a" style="left:445px;top:449px;width:925px;height:140px;background:#2043cf;overflow:hidden">
  <div class="a" style="left:660px;top:-4px;width:265px;height:150px;background-image:radial-gradient(circle,rgba(255,255,255,.03) 6.500px,transparent 7px);background-size:19px 19px"></div>
  <div class="a" style="left:0;top:90px;width:95px;height:50px;background-image:radial-gradient(circle,rgba(255,255,255,.03) 6.500px,transparent 7px);background-size:19px 19px"></div>
  <svg style="left:170px;top:38px" width="130" height="110" viewBox="0 0 130 110" fill="none"><path d="M8 15l55-15 62 20c0 50-12 85-60 110C20 100 5 60 8 15z" fill="rgba(255,255,255,.045)"/><g stroke="rgba(255,255,255,.07)" stroke-width="5"><path d="M35 70c-2-30 10-45 27-45s27 15 27 35"/><path d="M48 85c-4-30 0-47 14-47s17 15 16 35"/><path d="M62 55c-1 20 0 35 3 45"/></g></svg>
</div>
<div class="a" style="left:485px;top:449px;width:149px;height:40px;background:rgba(255,255,255,.2);border-radius:0 0 8px 8px"></div>
<div class="t" style="left:497px;top:465px;font-size:13px;color:#fff;font-weight:700;letter-spacing:.08px">2024-02-01 16:43:42</div>
<svg style="left:526px;top:479px" width="66" height="2"><path d="M0 1h9M14 1h9M28 1h9M42 1h9M56 1h10" stroke="#fff" stroke-width="2"/></svg>
<svg style="left:748px;top:486px" width="32" height="36" viewBox="0 0 32 36" fill="none"><path d="M16 35l-6-5.500a15 15 0 1 1 12 0z" stroke="#fff" stroke-width="2.200" stroke-linejoin="round"/><circle cx="16" cy="16" r="6.500" stroke="#9fb0ee" stroke-width="3"/></svg>
<div class="t" style="left:794px;top:504px;font-size:34.500px;font-weight:700;color:#fff;line-height:36px;height:36px;margin-top:-18px;letter-spacing:.1px">87.196.74.145</div>
<div class="a" style="left:1033px;top:485px;width:40px;height:40px;border-radius:50%;background:rgba(255,255,255,.14)"></div>
<svg style="left:1044px;top:495px" width="18" height="20" viewBox="0 0 18 20" fill="none"><path d="M12 3V1.500H3A2 2 0 0 0 1 3.500V14h2" stroke="#fff" stroke-width="1.500"/><rect x="5" y="4" width="12" height="15" rx="2.500" stroke="#fff" stroke-width="1.500"/><path d="M8.500 9h6M8.500 12h6M8.500 15h6" stroke="#9fb0ee" stroke-width="1.300"/></svg>
<div class="t" style="left:810px;top:546px;font-size:16px;color:#fff;letter-spacing:.35px">葡萄牙 / lisboa / carnaxide</div>
<div class="a" style="left:726px;top:467px;width:395px;height:97px;border:3px solid #f6281e;border-radius:3px"></div>

<div class="a" style="left:465px;top:629px;width:885px;height:380px;background:#fff;border-radius:20px 20px 0 0"></div>
<div class="t m" style="left:683px;top:665px;color:#777a84">查看浏览器评分</div>
<svg style="left:793px;top:658px" width="16" height="15"><rect width="16" height="15" rx="3" fill="#2b3158"/></svg>
<div class="t" style="left:795px;top:665px;font-size:6px;color:#fff">Scan</div>
<div class="t lnk" style="left:813px;top:665px">BrowserScan</div>
<svg style="left:912px;top:659px" width="11" height="14" viewBox="0 0 11 14" fill="none" stroke="#555" stroke-width="1.100"><ellipse cx="5.500" cy="7" rx="5" ry="6.500"/><ellipse cx="5.500" cy="7" rx="3" ry="4.500"/><path d="M5.500 3v8"/></svg>
<div class="t lnk" style="left:931px;top:665px">BrowserLeaks</div>
<div class="a" style="left:1034px;top:658px;width:16px;height:15px;background:#0a5a96;color:#fff;font-size:12px;font-weight:700;text-align:center;line-height:16px">IP</div>
<div class="t lnk" style="left:1054px;top:665px;letter-spacing:.45px">IP2Location</div>

<div class="a" style="left:485px;top:702px;width:4px;height:20px;background:#a6b8ff"></div>
<div class="t m" style="left:495px;top:712px">账号信息</div>

<div class="row" style="top:739px"></div>
<div class="row" style="top:827px"></div>
<div class="row" style="top:915px"></div>

<div class="lb" style="top:760px">名称</div><div class="vl" style="top:760px;letter-spacing:1px">240115</div>
<div class="lb" style="top:804px">启动时间</div><div class="vl" style="top:804px;letter-spacing:.85px">2024-02-01 16:43:42</div>
<div class="lb" style="top:848px">分组</div><div class="vl" style="top:848px">未分组</div>
<div class="lb" style="top:892px">序号 / 账号ID</div><div class="vl" style="top:892px;letter-spacing:.8px">1/jdad4q3</div>
<div class="lb" style="top:936px">用户账号</div><div class="vl" style="top:936px">--</div>
<div class="lb" style="top:980px">代理类型</div><div class="vl" style="top:980px;letter-spacing:.4px">Http Proxy</div>

</body></html>
